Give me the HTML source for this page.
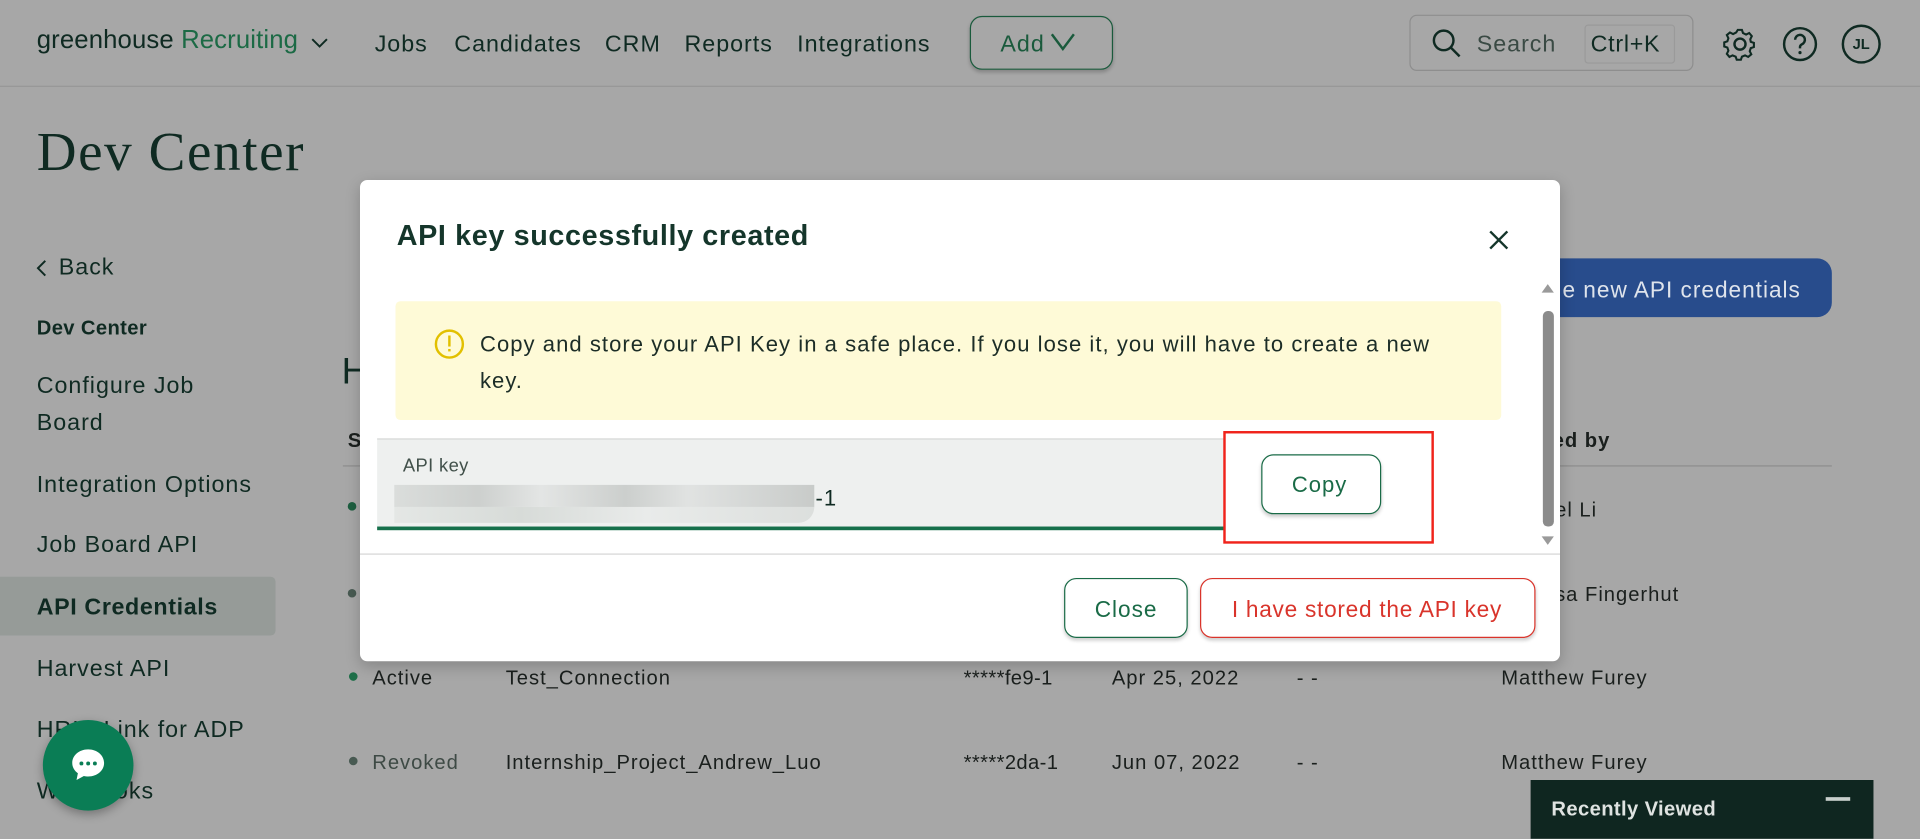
<!DOCTYPE html>
<html><head><meta charset="utf-8"><style>
html,body{margin:0;padding:0;width:1920px;height:839px;overflow:hidden;background:#a7a7a7}
#w{position:absolute;left:0;top:0;width:1568px;height:685px;transform:scale(1.22449);transform-origin:0 0;font-family:"Liberation Sans",sans-serif;color:#0f2a22;letter-spacing:0.8px}
.a{position:absolute;white-space:nowrap}
.n{font-size:19px;margin-top:2px}
.r{font-size:16.5px;color:#1a1f1d;margin-top:2px}
</style></head><body><div id="w">
<div class="a" style="left:0;top:70px;width:1568px;height:1px;background:#979797"></div>
<div class="a" style="left:30px;top:21px;font-size:21px;letter-spacing:0.1px">greenhouse <span style="color:#1c6a45">Recruiting</span></div>
<svg class="a" style="left:253px;top:29px" width="16" height="12"><path d="M2 3l6 6 6-6" stroke="#0f2a22" stroke-width="1.6" fill="none"/></svg>
<div class="a n" style="left:306px;top:24px">Jobs</div>
<div class="a n" style="left:371px;top:24px">Candidates</div>
<div class="a n" style="left:494px;top:24px">CRM</div>
<div class="a n" style="left:559px;top:24px">Reports</div>
<div class="a n" style="left:651px;top:24px">Integrations</div>
<div class="a" style="left:792px;top:13px;width:115px;height:42px;border:1.5px solid #1a5a3c;border-radius:10px;box-shadow:0 2px 3px rgba(0,0,0,.2)"></div>
<div class="a n" style="left:817px;top:24px;color:#1a5a3c">Add</div>
<svg class="a" style="left:857px;top:26px" width="24" height="16"><path d="M2 2l9 12 9-12" stroke="#1a5a3c" stroke-width="2" fill="none"/></svg>
<div class="a" style="left:1151px;top:12px;width:230px;height:44px;border:1px solid #8e8e8e;border-radius:6px"></div>
<svg class="a" style="left:1168px;top:22px" width="28" height="28"><circle cx="11" cy="11" r="8" stroke="#0f2a22" stroke-width="2" fill="none"/><path d="M17 17l7 7" stroke="#0f2a22" stroke-width="2"/></svg>
<div class="a n" style="left:1206px;top:24px;color:#3a4a44">Search</div>
<div class="a" style="left:1294px;top:20px;width:72px;height:30px;border:1px solid #9a9a9a;border-radius:3px"></div>
<div class="a n" style="left:1299px;top:24px;color:#0f2a22;letter-spacing:0.6px">Ctrl+K</div>
<svg class="a" style="left:1406px;top:21px" width="30" height="30"><circle cx="15" cy="15" r="4.5" stroke="#0f2a22" stroke-width="2" fill="none"/><path d="M13 4h4l1 3 3 1.5 3-1.5 2.5 3-1.5 3 .5 2.5 3 1v4l-3 1-1 3 1.5 3-3 2.5-3-1.5-3 1.2-1 3h-4l-1-3-3-1.2-3 1.5-2.5-3 1.5-3-1-3-3-1v-4l3-1 1-3-1.5-3 3-2.5 3 1.5 3-1.5z" transform="scale(.85) translate(2.5 0)" stroke="#0f2a22" stroke-width="2" fill="none"/></svg>
<svg class="a" style="left:1455px;top:21px" width="30" height="30"><circle cx="15" cy="15" r="13" stroke="#0f2a22" stroke-width="2" fill="none"/><path d="M11 11.5a4 4 0 1 1 5.5 3.7c-1 .5-1.5 1.2-1.5 2.3v1" stroke="#0f2a22" stroke-width="2" fill="none"/><circle cx="15" cy="22" r="1.3" fill="#0f2a22"/></svg>
<div class="a" style="left:1504px;top:20px;width:28px;height:28px;border:2px solid #0f2a22;border-radius:50%;font-size:12px;font-weight:bold;text-align:center;line-height:28px;letter-spacing:0">JL</div>

<div class="a" style="left:30px;top:98px;font-family:'Liberation Serif',serif;font-size:45px;color:#0f2a22;letter-spacing:1.3px">Dev Center</div>
<svg class="a" style="left:28px;top:210px" width="12" height="18"><path d="M9 3l-6 6 6 6" stroke="#0f2a22" stroke-width="1.6" fill="none"/></svg>
<div class="a n" style="left:48px;top:206px">Back</div>
<div class="a" style="left:30px;top:259px;font-size:16.5px;font-weight:bold;letter-spacing:0.3px">Dev Center</div>
<div class="a n" style="left:30px;top:303px">Configure Job</div>
<div class="a n" style="left:30px;top:333px">Board</div>
<div class="a n" style="left:30px;top:384px">Integration Options</div>
<div class="a n" style="left:30px;top:433px">Job Board API</div>
<div class="a" style="left:0;top:471px;width:225px;height:48px;background:#969b98;border-radius:0 4px 4px 0"></div>
<div class="a n" style="left:30px;top:484px;font-weight:bold;letter-spacing:0.5px">API Credentials</div>
<div class="a n" style="left:30px;top:534px">Harvest API</div>
<div class="a n" style="left:30px;top:584px">HRIS Link for ADP</div>
<div class="a n" style="left:30px;top:634px">Webhooks</div>

<div class="a" style="left:1200px;top:211px;width:296px;height:48px;background:#284c8c;border-radius:12px"></div>
<div class="a n" style="left:1276px;top:224px;color:#dfe4ec;font-size:18.5px">e new API credentials</div>
<div class="a" style="left:279px;top:287px;font-size:30px">H</div>
<div class="a r" style="left:284px;top:349px;font-weight:bold">S</div>
<div class="a r" style="left:1268px;top:349px;font-weight:bold">ed by</div>
<div class="a" style="left:280px;top:380px;width:1216px;height:1px;background:#8d8d8d"></div>
<div class="a r" style="left:1270px;top:406px">el Li</div>
<div class="a" style="left:284px;top:410px;width:7px;height:7px;border-radius:50%;background:#1d5e40"></div>
<div class="a" style="left:284px;top:481px;width:7px;height:7px;border-radius:50%;background:#485a52"></div>
<div class="a r" style="left:1270px;top:475px">sa Fingerhut</div>
<div class="a" style="left:285px;top:549px;width:7px;height:7px;border-radius:50%;background:#1d6e48"></div>
<div class="a r" style="left:304px;top:543px">Active</div>
<div class="a r" style="left:413px;top:543px">Test_Connection</div>
<div class="a r" style="left:787px;top:543px;letter-spacing:0.3px">*****fe9-1</div>
<div class="a r" style="left:908px;top:543px">Apr 25, 2022</div>
<div class="a r" style="left:1059px;top:543px">- -</div>
<div class="a r" style="left:1226px;top:543px">Matthew Furey</div>
<div class="a" style="left:285px;top:618px;width:7px;height:7px;border-radius:50%;background:#485a52"></div>
<div class="a r" style="left:304px;top:612px;color:#3e4a45">Revoked</div>
<div class="a r" style="left:413px;top:612px">Internship_Project_Andrew_Luo</div>
<div class="a r" style="left:787px;top:612px;letter-spacing:0.3px">*****2da-1</div>
<div class="a r" style="left:908px;top:612px">Jun 07, 2022</div>
<div class="a r" style="left:1059px;top:612px">- -</div>
<div class="a r" style="left:1226px;top:612px">Matthew Furey</div>

<div class="a" style="left:35px;top:588px;width:74px;height:74px;border-radius:50%;background:#0a7d55;box-shadow:0 3px 8px rgba(0,0,0,.3)"></div>
<svg class="a" style="left:56px;top:609px" width="32" height="32"><path d="M16 3C8.5 3 3 8 3 14c0 3.5 1.8 6.5 4.6 8.5L6.5 28l6-3.3c1.1.3 2.3.4 3.5.4 7.5 0 13-5 13-11S23.5 3 16 3z" fill="#fff"/><circle cx="10.5" cy="14.5" r="1.6" fill="#0a7d55"/><circle cx="16" cy="14.5" r="1.6" fill="#0a7d55"/><circle cx="21.5" cy="14.5" r="1.6" fill="#0a7d55"/></svg>
<div class="a" style="left:1250px;top:637px;width:280px;height:48px;background:#0f2620"></div>
<div class="a" style="left:1267px;top:652px;font-size:16.5px;font-weight:bold;color:#dfe3e1;letter-spacing:0.3px">Recently Viewed</div>
<div class="a" style="left:1491px;top:651px;width:20px;height:3px;background:#c8cfcc"></div>

<div class="a" style="left:294px;top:147px;width:980px;height:393px;background:#fff;border-radius:6px;box-shadow:0 4px 12px rgba(0,0,0,.2)"></div>
<div class="a" style="left:324px;top:179px;font-size:23.5px;font-weight:bold;color:#15362b;letter-spacing:0.5px">API key successfully created</div>
<svg class="a" style="left:1215px;top:187px" width="18" height="18"><path d="M2 2l14 14M16 2L2 16" stroke="#15362b" stroke-width="2"/></svg>
<div class="a" style="left:323px;top:246px;width:903px;height:97px;background:#fefad7;border-radius:4px"></div>
<div class="a" style="left:355px;top:269px;width:24px;height:24px;border:2px solid #e2c000;border-radius:50%;box-sizing:border-box"></div>
<div class="a" style="left:366px;top:274px;width:1.5px;height:9px;background:#e2c000"></div>
<div class="a" style="left:366px;top:285px;width:1.5px;height:1.5px;background:#e2c000"></div>
<div class="a" style="left:392px;top:266px;font-size:18px;line-height:30px;color:#1c2d27;letter-spacing:0.85px">Copy and store your API Key in a safe place. If you lose it, you will have to create a new<br>key.</div>
<div class="a" style="left:308px;top:358px;width:692px;height:71px;background:#eef0ef;border-top:1px solid #d6d8d7;border-bottom:3px solid #16704b"></div>
<div class="a" style="left:329px;top:372px;font-size:15px;color:#41504a;letter-spacing:0.3px">API key</div>
<div class="a" style="left:322px;top:396px;width:343px;height:18px;background:linear-gradient(90deg,#d8dbd9,#c9ccca 20%,#e2e4e3 35%,#c8cbc9 55%,#dfe1e0 70%,#c4c7c5);opacity:.9"></div>
<div class="a" style="left:322px;top:414px;width:343px;height:13px;background:linear-gradient(90deg,#e4e7e5,#d7dbd8 30%,#e9ebea 60%,#dcdfdd);border-radius:0 0 20px 0"></div>
<div class="a" style="left:666px;top:397px;font-size:18px">-1</div>
<div class="a" style="left:1030px;top:371px;width:96px;height:47px;border:1.5px solid #1a6b47;border-radius:10px;box-shadow:0 2px 3px rgba(0,0,0,.2)"></div>
<div class="a" style="left:1055px;top:386px;font-size:18px;color:#1a6b47">Copy</div>
<div class="a" style="left:999px;top:352px;width:168px;height:88px;border:2.5px solid #f0231b"></div>
<div class="a" style="left:1259px;top:232px;width:0;height:0;border-left:5px solid transparent;border-right:5px solid transparent;border-bottom:7px solid #9a9a9a"></div>
<div class="a" style="left:1260px;top:254px;width:9px;height:176px;background:#8b8b8b;border-radius:4px"></div>
<div class="a" style="left:1259px;top:438px;width:0;height:0;border-left:5px solid transparent;border-right:5px solid transparent;border-top:7px solid #9a9a9a"></div>
<div class="a" style="left:294px;top:452px;width:980px;height:1px;background:#d5d5d5"></div>
<div class="a" style="left:869px;top:472px;width:99px;height:47px;border:1.5px solid #1a6b47;border-radius:10px;box-shadow:0 2px 3px rgba(0,0,0,.2)"></div>
<div class="a" style="left:894px;top:487px;font-size:18.5px;color:#1a6b47">Close</div>
<div class="a" style="left:980px;top:472px;width:272px;height:47px;border:1.5px solid #d9342b;border-radius:10px;box-shadow:0 2px 3px rgba(0,0,0,.2)"></div>
<div class="a" style="left:1006px;top:487px;font-size:18.5px;color:#d9342b;letter-spacing:0.6px">I have stored the API key</div>
</div></body></html>
